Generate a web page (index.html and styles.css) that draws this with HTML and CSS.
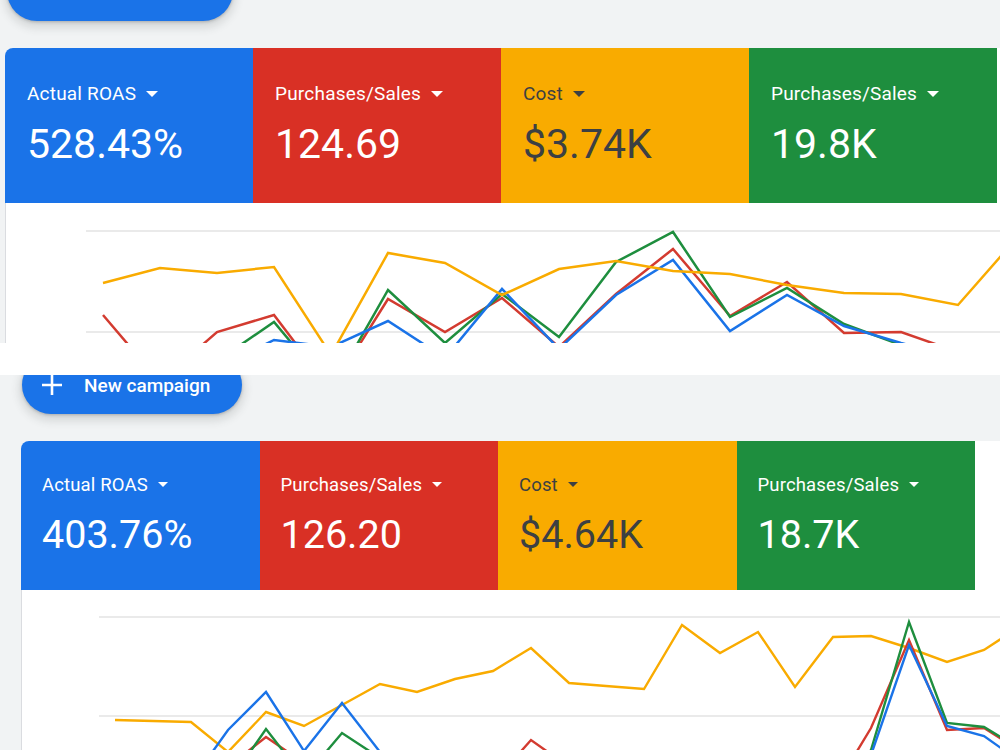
FILE: index.html
```html
<!doctype html>
<html lang="en">
    <head>
        <meta charset="utf-8">
        <title>Campaign overview</title>
        <link rel="stylesheet" href="styles.css">
    </head>
    <body>
        <div class="shot shot-a">
            <div class="fab"></div>
            <div class="card">
                <div class="tiles">
                    <div class="tile tile-blue">
                        <div class="tile-label">Actual ROAS<i class="caret"></i></div>
                        <div class="tile-value">528.43%</div>
                    </div>
                    <div class="tile tile-red">
                        <div class="tile-label">Purchases/Sales<i class="caret"></i></div>
                        <div class="tile-value">124.69</div>
                    </div>
                    <div class="tile tile-yellow">
                        <div class="tile-label">Cost<i class="caret"></i></div>
                        <div class="tile-value">$3.74K</div>
                    </div>
                    <div class="tile tile-green">
                        <div class="tile-label">Purchases/Sales<i class="caret"></i></div>
                        <div class="tile-value">19.8K</div>
                    </div>
                </div>
                <div class="chart">
                    <svg width="994" height="140" viewBox="6 203 994 140">
                        <line class="grid" x1="86" y1="231" x2="1000" y2="231"/>
                        <line class="grid" x1="86" y1="332" x2="1000" y2="332"/>
                        <polyline class="line line-red" points="103,315 160,382 217,332 274,315 331,390 388,299 445,332 502,298 559,347 616,294 673,249 730,316 787,282 844,333 901,332 958,352 1015,365"/>
                        <polyline class="line line-green" points="103,385 160,380 217,361 274,322 331,390 388,290 445,343 502,294 559,337 616,262 673,232 730,317 787,288 844,324 901,345 958,365 1015,375"/>
                        <polyline class="line line-blue" points="103,390 160,385 217,368 274,340 331,347 388,321 445,358 502,289 559,349 616,295 673,260 730,331 787,295 844,326 901,343 958,358 1015,370"/>
                        <polyline class="line line-yellow" points="103,283 160,268 217,273 274,267 331,355 388,253 445,263 502,295 559,269 616,261 673,271 730,274 787,285 844,293 901,294 958,305 1015,240"/>
                    </svg>
                </div>
            </div>
        </div>

        <div class="shot shot-b">
            <div class="fab">
                <svg class="fab-icon" viewBox="0 0 20 20"><path d="M10 0v20M0 10h20"/></svg>
                <span>New campaign</span>
            </div>
            <div class="card">
                <div class="tiles">
                    <div class="tile tile-blue">
                        <div class="tile-label">Actual ROAS<i class="caret"></i></div>
                        <div class="tile-value">403.76%</div>
                    </div>
                    <div class="tile tile-red">
                        <div class="tile-label">Purchases/Sales<i class="caret"></i></div>
                        <div class="tile-value">126.20</div>
                    </div>
                    <div class="tile tile-yellow">
                        <div class="tile-label">Cost<i class="caret"></i></div>
                        <div class="tile-value">$4.64K</div>
                    </div>
                    <div class="tile tile-green">
                        <div class="tile-label">Purchases/Sales<i class="caret"></i></div>
                        <div class="tile-value">18.7K</div>
                    </div>
                </div>
                <div class="chart">
                    <svg width="978" height="160" viewBox="22 590 978 160">
                        <line class="grid" x1="99" y1="617" x2="1000" y2="617"/>
                        <line class="grid" x1="99" y1="716" x2="1000" y2="716"/>
                        <polyline class="line line-yellow" points="115,720 153,721 191,722 228,752 266,712 304,726 342,705 380,684 417,692 455,679 493,671 531,648 569,683 606,686 644,689 682,625 720,653 758,632 795,687 833,637 871,636 909,648 947,662 984,650 1022,625"/>
                        <polyline class="line line-red" points="115,790 153,790 191,790 228,767 266,737 304,763 342,790 380,790 417,790 455,790 493,783 531,740 569,767 606,790 644,790 682,790 720,790 758,790 795,790 833,791 871,728 909,640 947,730 984,728 1022,752"/>
                        <polyline class="line line-green" points="115,790 153,790 191,790 228,784 266,729 304,778 342,733 380,758 417,790 455,790 493,790 531,790 569,790 606,790 644,790 682,790 720,790 758,790 795,790 833,790 871,750 909,622 947,723 984,727 1022,750"/>
                        <polyline class="line line-blue" points="115,790 153,790 191,782 228,730 266,692 304,751 342,703 380,752 417,790 455,790 493,790 531,790 569,790 606,790 644,790 682,790 720,790 758,790 795,790 833,790 871,755 909,645 947,726 984,736 1022,763"/>
                    </svg>
                </div>
            </div>
        </div>
    </body>
</html>
```

FILE: styles.css
```css
html, body { margin: 0; }
body { width: 1000px; height: 750px; overflow: hidden; background: #fff; font-family: Roboto, "Noto Sans", sans-serif; }

/* each phone capture */
.shot { background: #f1f3f4; overflow: hidden; }
.shot-a { height: 343px; padding-left: 5px; margin-bottom: 32px; }
.shot-b { height: 375px; padding-left: 21px; }

/* floating "new campaign" button */
.fab {
    display: flex;
    align-items: center;
    gap: 22px;
    box-sizing: border-box;
    background: #1a73e8;
    color: #fff;
    font-weight: 500;
    box-shadow: 0 1px 3px rgba(60,64,67,0.3), 0 4px 8px 3px rgba(60,64,67,0.15);
}
.shot-a .fab { width: 226px; height: 60px; margin: -39px 0 0 2px; border-radius: 30px; }
.shot-b .fab { width: 220px; height: 58px; margin: -19px 0 0 1px; padding-left: 20px; border-radius: 29px; font-size: 19px; }
.fab-icon { width: 20px; height: 20px; flex: none; fill: none; stroke: #fff; stroke-width: 2.6; }

/* scorecard + chart */
.card { margin-top: 27px; background: #fff; border-top-left-radius: 8px; overflow: hidden; }
.tiles { display: flex; }
.tile { flex: none; box-sizing: border-box; color: #fff; }
.tile-blue { background: #1a73e8; }
.tile-red { background: #d93025; }
.tile-yellow { background: #f9ab00; color: #3c4043; }
.tile-green { background: #1e8e3e; }

.shot-a .tile { width: 248px; height: 155px; padding: 34px 0 0 22px; }
.shot-a .tile-label { font-size: 19px; line-height: 24px; letter-spacing: .2px; }
.shot-a .tile-value { font-size: 41px; line-height: 48px; margin-top: 14px; }

.shot-b .tile { width: 238.5px; height: 149px; padding: 33px 0 0 21px; }
.shot-b .tile-label { font-size: 18.5px; line-height: 23px; letter-spacing: .15px; }
.shot-b .tile-value { font-size: 39.5px; line-height: 46px; margin-top: 14.5px; }

.caret {
    display: inline-block;
    border-left: 6px solid transparent;
    border-right: 6px solid transparent;
    border-top: 6px solid currentColor;
    margin-left: 10px;
    vertical-align: 3px;
}
.shot-b .caret { border-width: 5.5px 5.5px 0; vertical-align: 4px; }

.chart { border-left: 1px solid #dadce0; }
.chart svg { display: block; }
.grid { stroke: #e3e3e3; stroke-width: 1.5; }
.line { fill: none; stroke-width: 2.5; stroke-linejoin: miter; }
.shot-b .line { stroke-width: 2.4; }
.line-yellow { stroke: #f9ab00; }
.line-red { stroke: #d33b30; }
.line-green { stroke: #1e8e3e; }
.line-blue { stroke: #1a73e8; }
```
